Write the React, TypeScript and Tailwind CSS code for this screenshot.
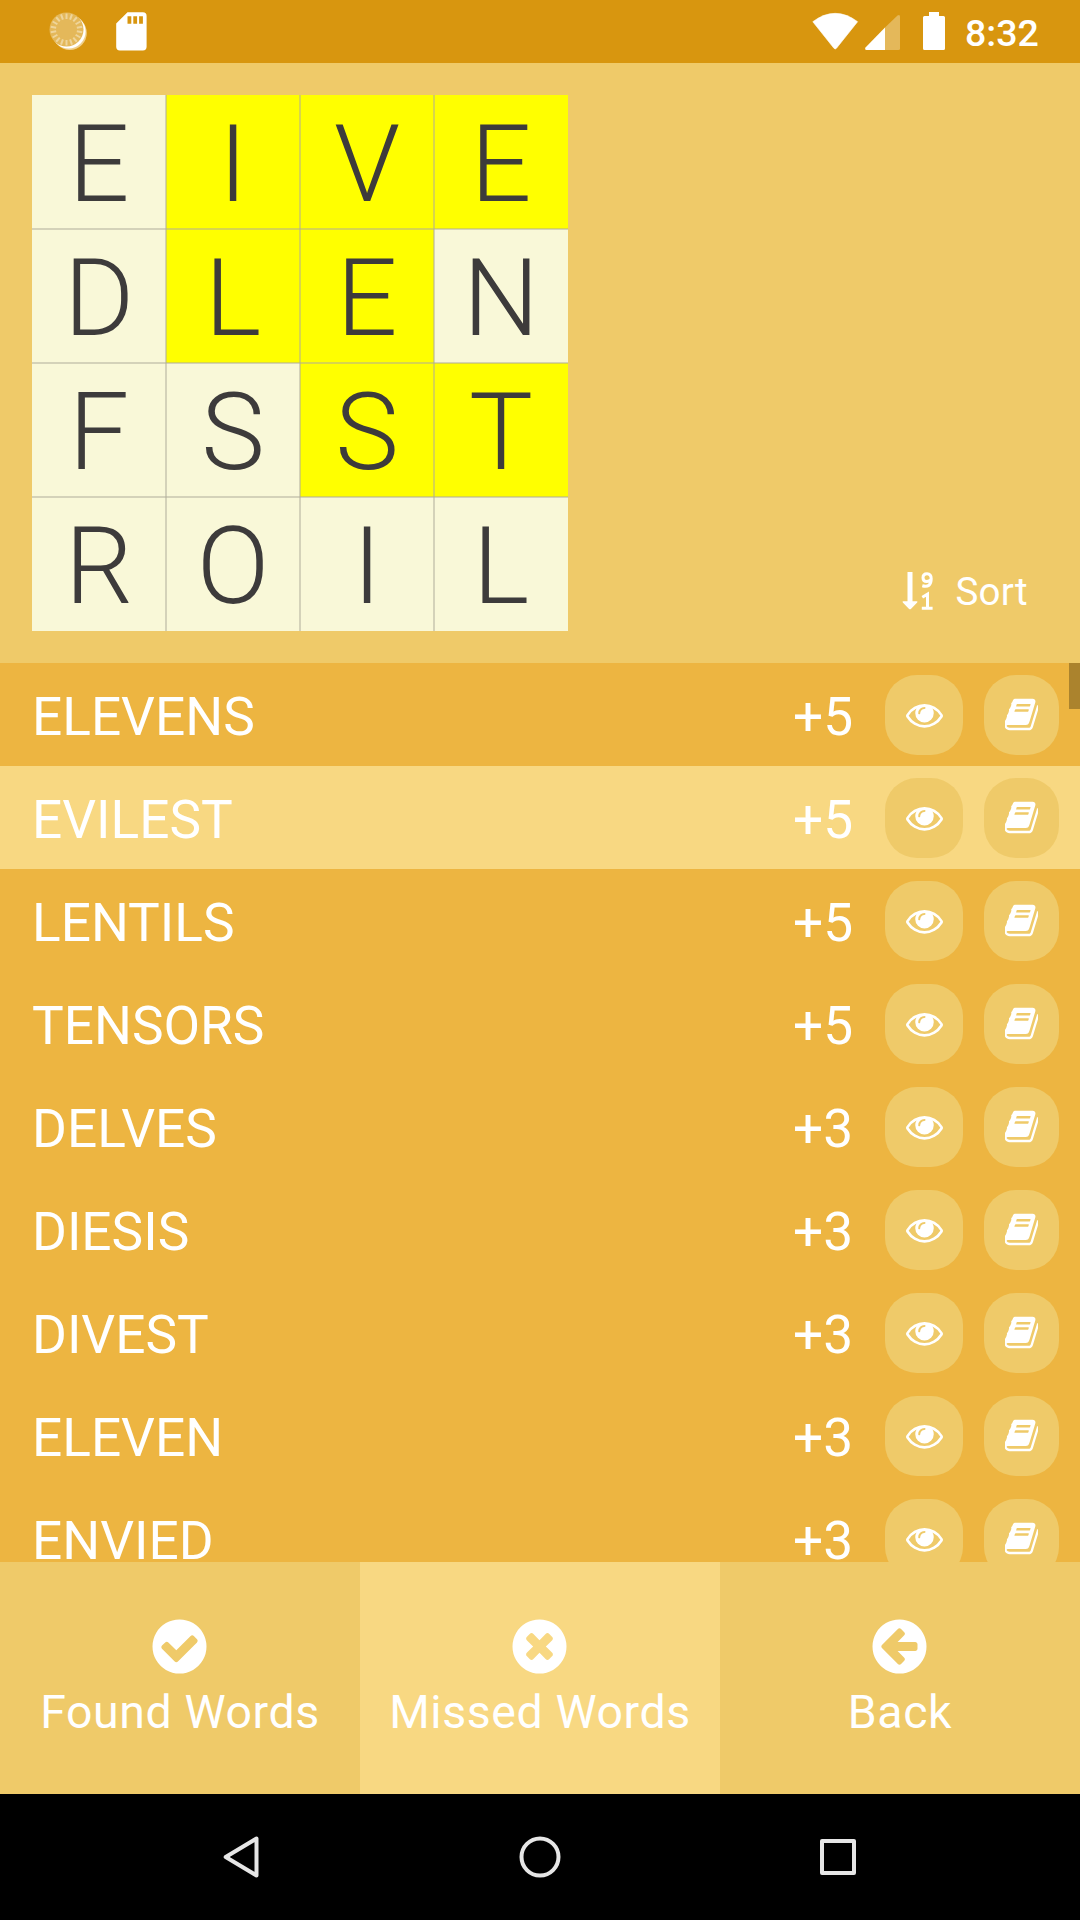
import React from "react";

const GRID: { letter: string; lit: boolean }[] = [
  { letter: "E", lit: false }, { letter: "I", lit: true }, { letter: "V", lit: true }, { letter: "E", lit: true },
  { letter: "D", lit: false }, { letter: "L", lit: true }, { letter: "E", lit: true }, { letter: "N", lit: false },
  { letter: "F", lit: false }, { letter: "S", lit: false }, { letter: "S", lit: true }, { letter: "T", lit: true },
  { letter: "R", lit: false }, { letter: "O", lit: false }, { letter: "I", lit: false }, { letter: "L", lit: false },
];

const WORDS: { word: string; score: number; selected?: boolean }[] = [
  { word: "ELEVENS", score: 5 },
  { word: "EVILEST", score: 5, selected: true },
  { word: "LENTILS", score: 5 },
  { word: "TENSORS", score: 5 },
  { word: "DELVES", score: 3 },
  { word: "DIESIS", score: 3 },
  { word: "DIVEST", score: 3 },
  { word: "ELEVEN", score: 3 },
  { word: "ENVIED", score: 3 },
];

const DISC =
  "M1664 896q0 209-103 385.5t-279.5 279.5-385.5 103-385.5-103-279.5-279.5-103-385.5 103-385.5 279.5-279.5 385.5-103 385.5 103 279.5 279.5 103 385.5z";

const ICONS = {
  eye: "M1664 960q-152-236-381-353 61 104 61 225 0 185-131.5 316.5t-316.5 131.5-316.5-131.5-131.5-316.5q0-121 61-225-229 117-381 353 133 205 333.5 326.5t434.5 121.5 434.5-121.5 333.5-326.5zm-720-384q0-20-14-34t-34-14q-125 0-214.5 89.5t-89.5 214.5q0 20 14 34t34 14 34-14 14-34q0-86 61-147t147-61q20 0 34-14t14-34zm848 384q0 34-20 69-140 230-376.5 368.5t-499.5 138.5-499.5-139-376.5-368q-20-35-20-69t20-69q140-229 376.5-368t499.5-139 499.5 139 376.5 368q20 35 20 69z",
  book: "M1703 478q40 57 18 129l-275 906q-19 64-76.5 107.5t-122.5 43.5h-923q-77 0-148.5-53.5t-99.5-131.5q-24-67-2-127 0-4 3-27t4-37q1-8-3-21.5t-3-19.5q2-11 8-21t16.5-23.5 16.5-23.5q23-38 45-91.5t30-91.5q3-10 .5-30t-.5-28q3-11 17-28t17-23q21-36 42-92t25-90q1-9-2.5-32t.5-28q4-13 22-30.5t22-22.5q19-26 42.5-84.5t27.5-96.5q1-8-3-25.5t-2-26.5q2-8 9-18t18-23 17-21q8-12 16.5-30.5t15-35 16-36 19.5-32 26.5-23.5 36-11.5 47.5 5.5l-1 3q38-9 51-9h761q74 0 114 56t18 130l-274 906q-36 119-71.5 153.5t-128.5 34.5h-869q-27 0-38 15-11 16-1 43 24 70 144 70h923q29 0 56-15.5t35-41.5l300-987q7-22 5-57 38 15 59 43zm-1064 2q-4 13 2 22.5t20 9.5h608q13 0 25.5-9.5t16.5-22.5l21-64q4-13-2-22.5t-20-9.5h-608q-13 0-25.5 9.5t-16.5 22.5zm-83 256q-4 13 2 22.5t20 9.5h608q13 0 25.5-9.5t16.5-22.5l21-64q4-13-2-22.5t-20-9.5h-608q-13 0-25.5 9.5t-16.5 22.5z",
  check:
    "M1412 734q0-28-18-46l-91-90q-19-19-45-19t-45 19l-408 407-226-226q-19-19-45-19t-45 19l-91 90q-18 18-18 46 0 27 18 45l362 362q19 19 45 19 27 0 46-19l543-543q18-18 18-45z" + DISC,
  times:
    "M1277 1122q0-26-19-45l-181-181 181-181q19-19 19-45 0-27-19-46l-90-90q-19-19-46-19-26 0-45 19l-181 181-181-181q-19-19-45-19-27 0-46 19l-90 90q-19 19-19 46 0 26 19 45l181 181-181 181q-19 19-19 45 0 27 19 46l90 90q19 19 46 19 26 0 45-19l181-181 181 181q19 19 45 19 27 0 46-19l90-90q19-19 19-46z" + DISC,
  back:
    "M1408 960v-128q0-26-19-45t-45-19h-502l189-189q19-19 19-45t-19-45l-91-91q-18-18-45-18t-45 18l-362 362-91 91q-18 18-18 45t18 45l91 91 362 362q18 18 45 18t45-18l91-91q18-18 18-45t-18-45l-189-189h502q26 0 45-19t19-45z" + DISC,
};

function Icon({ name, className, viewBox = "0 0 1792 1792" }: { name: keyof typeof ICONS; className: string; viewBox?: string }) {
  return (
    <svg viewBox={viewBox} className={className} fill="currentColor" fillRule="evenodd">
      <path d={ICONS[name]} />
    </svg>
  );
}

function StatusBar() {
  const ticks = Array.from({ length: 18 }, (_, i) => i * 20);
  return (
    <header className="flex h-[63px] shrink-0 items-start bg-[#d8960f] pl-[48px] pr-[42px] pt-[10px] text-white">
      <svg className="h-[42px] w-[42px]" viewBox="48 10 42 42">
        <circle cx="69.800" cy="33" r="17" fill="#efd08c" />
        <circle cx="68.600" cy="31.600" r="17" fill="#fff" />
        <circle cx="66.500" cy="29.500" r="17" fill="#e4b85a" />
        {ticks.map((a) => (
          <path key={a} d="M66.500 13.500v5.500" stroke="#efd59b" strokeWidth="2" transform={`rotate(${a} 66.5 29.5)`} />
        ))}
      </svg>
      <svg className="ml-[24px] h-[42px] w-[36px]" viewBox="114 10 36 42">
        <path
          fill="#fff"
          fillRule="evenodd"
          d="M127.500 12.300h15.400a3.700 3.700 0 0 1 3.700 3.700v30.800a3.700 3.700 0 0 1-3.700 3.700h-23a3.700 3.700 0 0 1-3.700-3.700v-23.200zM127.500 16.200v7.600h3.800v-7.600zM133.300 16.200v7.600h3.800v-7.600zM139.100 16.200v7.600h3.800v-7.600z"
        />
      </svg>
      <div className="flex-1" />
      <svg className="h-[42px] w-[50px]" viewBox="810 10 50 42">
        <path d="M812.800 21.700Q835.200 5 857.600 21.700L836.500 48.200Q835.200 49.800 833.900 48.200z" fill="#fff" stroke="#fff" strokeWidth="0.600" strokeLinejoin="round" />
      </svg>
      <svg className="ml-[4px] h-[42px] w-[38px]" viewBox="864 10 38 42">
        <path d="M885 27.500 897.500 15.500Q900 14 900 16.500V48.500q0 1.500-1.500 1.500H885z" fill="#e4b85a" />
        <path d="M885 27.500V50H866.500Q864.400 50 865.500 47.600z" fill="#fff" />
      </svg>
      <svg className="ml-[20px] h-[42px] w-[24px]" viewBox="922 10 24 42">
        <path d="M929 12h10v4h4.500q1.500 0 1.500 1.500v31q0 1.500-1.500 1.500h-19q-1.500 0-1.500-1.500v-31q0-1.500 1.500-1.500h4.500z" fill="#fff" />
      </svg>
      <span className="ml-[19px] w-[73px] whitespace-nowrap text-[37.5px] font-medium leading-[47px]">8:32</span>
    </header>
  );
}

function Board() {
  return (
    <div className="grid h-[536px] w-[536px] grid-cols-4 grid-rows-4">
      {GRID.map((cell, i) => (
        <div key={i} className={`relative flex items-center justify-center ${cell.lit ? "bg-[#ffff00]" : "bg-[#f9f8d8]"}`}>
          <span className="pt-[6px] text-[107.2px] font-light leading-none text-[#3d3b3b]">{cell.letter}</span>
          {i % 4 !== 3 && <i className="absolute -right-px top-0 z-10 h-full w-[2px] bg-[#b0ac9a]/50" />}
          {i < 12 && <i className="absolute -bottom-px left-0 z-10 h-[2px] w-full bg-[#b0ac9a]/50" />}
        </div>
      ))}
    </div>
  );
}

function SortButton() {
  return (
    <button className="mb-[16px] flex items-center text-white">
      <svg className="mb-[2px] h-[40px] w-[34px]" viewBox="902 571 34 40" fill="currentColor">
        <path d="M907.500 572h5v29.300h4.200q1.300 0 .5 1.100l-6.300 6.500q-.9.800-1.800 0l-6.300-6.500q-.8-1.100.5-1.100h4.200z" />
        <g fill="none" stroke="currentColor">
          <path strokeWidth="3" d="M922.300 585.800q8.900 2.300 8.900-7 0-5.100-4.200-5.100-4 0-4 4 0 3.800 3.800 3.800 2.600 0 4.200-2" />
          <path strokeWidth="3" d="M922.300 597.200l5.200-3v13.800M921.800 608.200h10.800" />
        </g>
      </svg>
      <span className="ml-[19px] text-[38.5px] leading-[46px] tracking-[0.3px]">Sort</span>
    </button>
  );
}

function WordRow({ word, score, selected }: { word: string; score: number; selected?: boolean }) {
  return (
    <li className={`flex h-[103px] shrink-0 items-center pl-[32px] pr-[21px] ${selected ? "bg-[#f8d882]" : "bg-[#edb541]"}`}>
      <span className="flex-1 pt-[6px] text-[53.2px] leading-none">{word}</span>
      <span className="mr-[32px] w-[60px] whitespace-nowrap pt-[6px] text-[53.2px] leading-none">+{score}</span>
      <button className="mr-[21px] flex h-[80px] w-[78px] items-center justify-center rounded-[32px] bg-[#efca69]">
        <Icon name="eye" className="h-[37px] w-[37px]" />
      </button>
      <button className="flex h-[80px] w-[75px] items-center justify-center rounded-[32px] bg-[#efca69]">
        <Icon name="book" viewBox="97 0 1598 1792" className="h-[37px] w-[33px]" />
      </button>
    </li>
  );
}

function Tab({ icon, label, active }: { icon: keyof typeof ICONS; label: string; active?: boolean }) {
  return (
    <button className={`flex flex-1 flex-col items-center pt-[53px] ${active ? "bg-[#f8d882]" : "bg-[#efca69]"}`}>
      <Icon name={icon} className="mr-px h-[63px] w-[63px]" />
      <span className="mt-[7px] whitespace-nowrap text-[46.4px] leading-[54px] tracking-[0.6px]">{label}</span>
    </button>
  );
}

export default function App() {
  return (
    <div className="flex h-[1920px] w-[1080px] flex-col overflow-hidden bg-[#efca69] font-['Roboto',sans-serif]">
      <StatusBar />
      <section className="flex h-[600px] shrink-0 items-end justify-between pb-[32px] pl-[32px] pr-[52px]">
        <Board />
        <SortButton />
      </section>
      <main className="relative h-[899px] shrink-0 overflow-hidden bg-[#edb541] text-white">
        <ul className="flex flex-col">
          {WORDS.map((w) => (
            <WordRow key={w.word} {...w} />
          ))}
        </ul>
        <div className="absolute right-0 top-0 h-[46px] w-[11px] bg-[#ab832d]" />
      </main>
      <nav className="flex h-[232px] shrink-0 text-white">
        <Tab icon="check" label="Found Words" />
        <Tab icon="times" label="Missed Words" active />
        <Tab icon="back" label="Back" />
      </nav>
      <footer className="flex h-[126px] shrink-0 items-center justify-between bg-black pl-[218px] pr-[218px]">
        <svg className="h-[46px] w-[46px]" viewBox="218 1834 46 46" fill="none" stroke="#e6e6e6" strokeWidth="4" strokeLinejoin="round">
          <path d="M256.500 1838.500v37L225.700 1857z" />
        </svg>
        <svg className="h-[46px] w-[46px]" viewBox="517 1834 46 46" fill="none" stroke="#e6e6e6" strokeWidth="4">
          <circle cx="540" cy="1857" r="18.500" />
        </svg>
        <svg className="h-[46px] w-[46px]" viewBox="816 1834 46 46" fill="none" stroke="#e6e6e6" strokeWidth="4" strokeLinejoin="round">
          <path d="M822 1841h32v32h-32z" />
        </svg>
      </footer>
    </div>
  );
}
